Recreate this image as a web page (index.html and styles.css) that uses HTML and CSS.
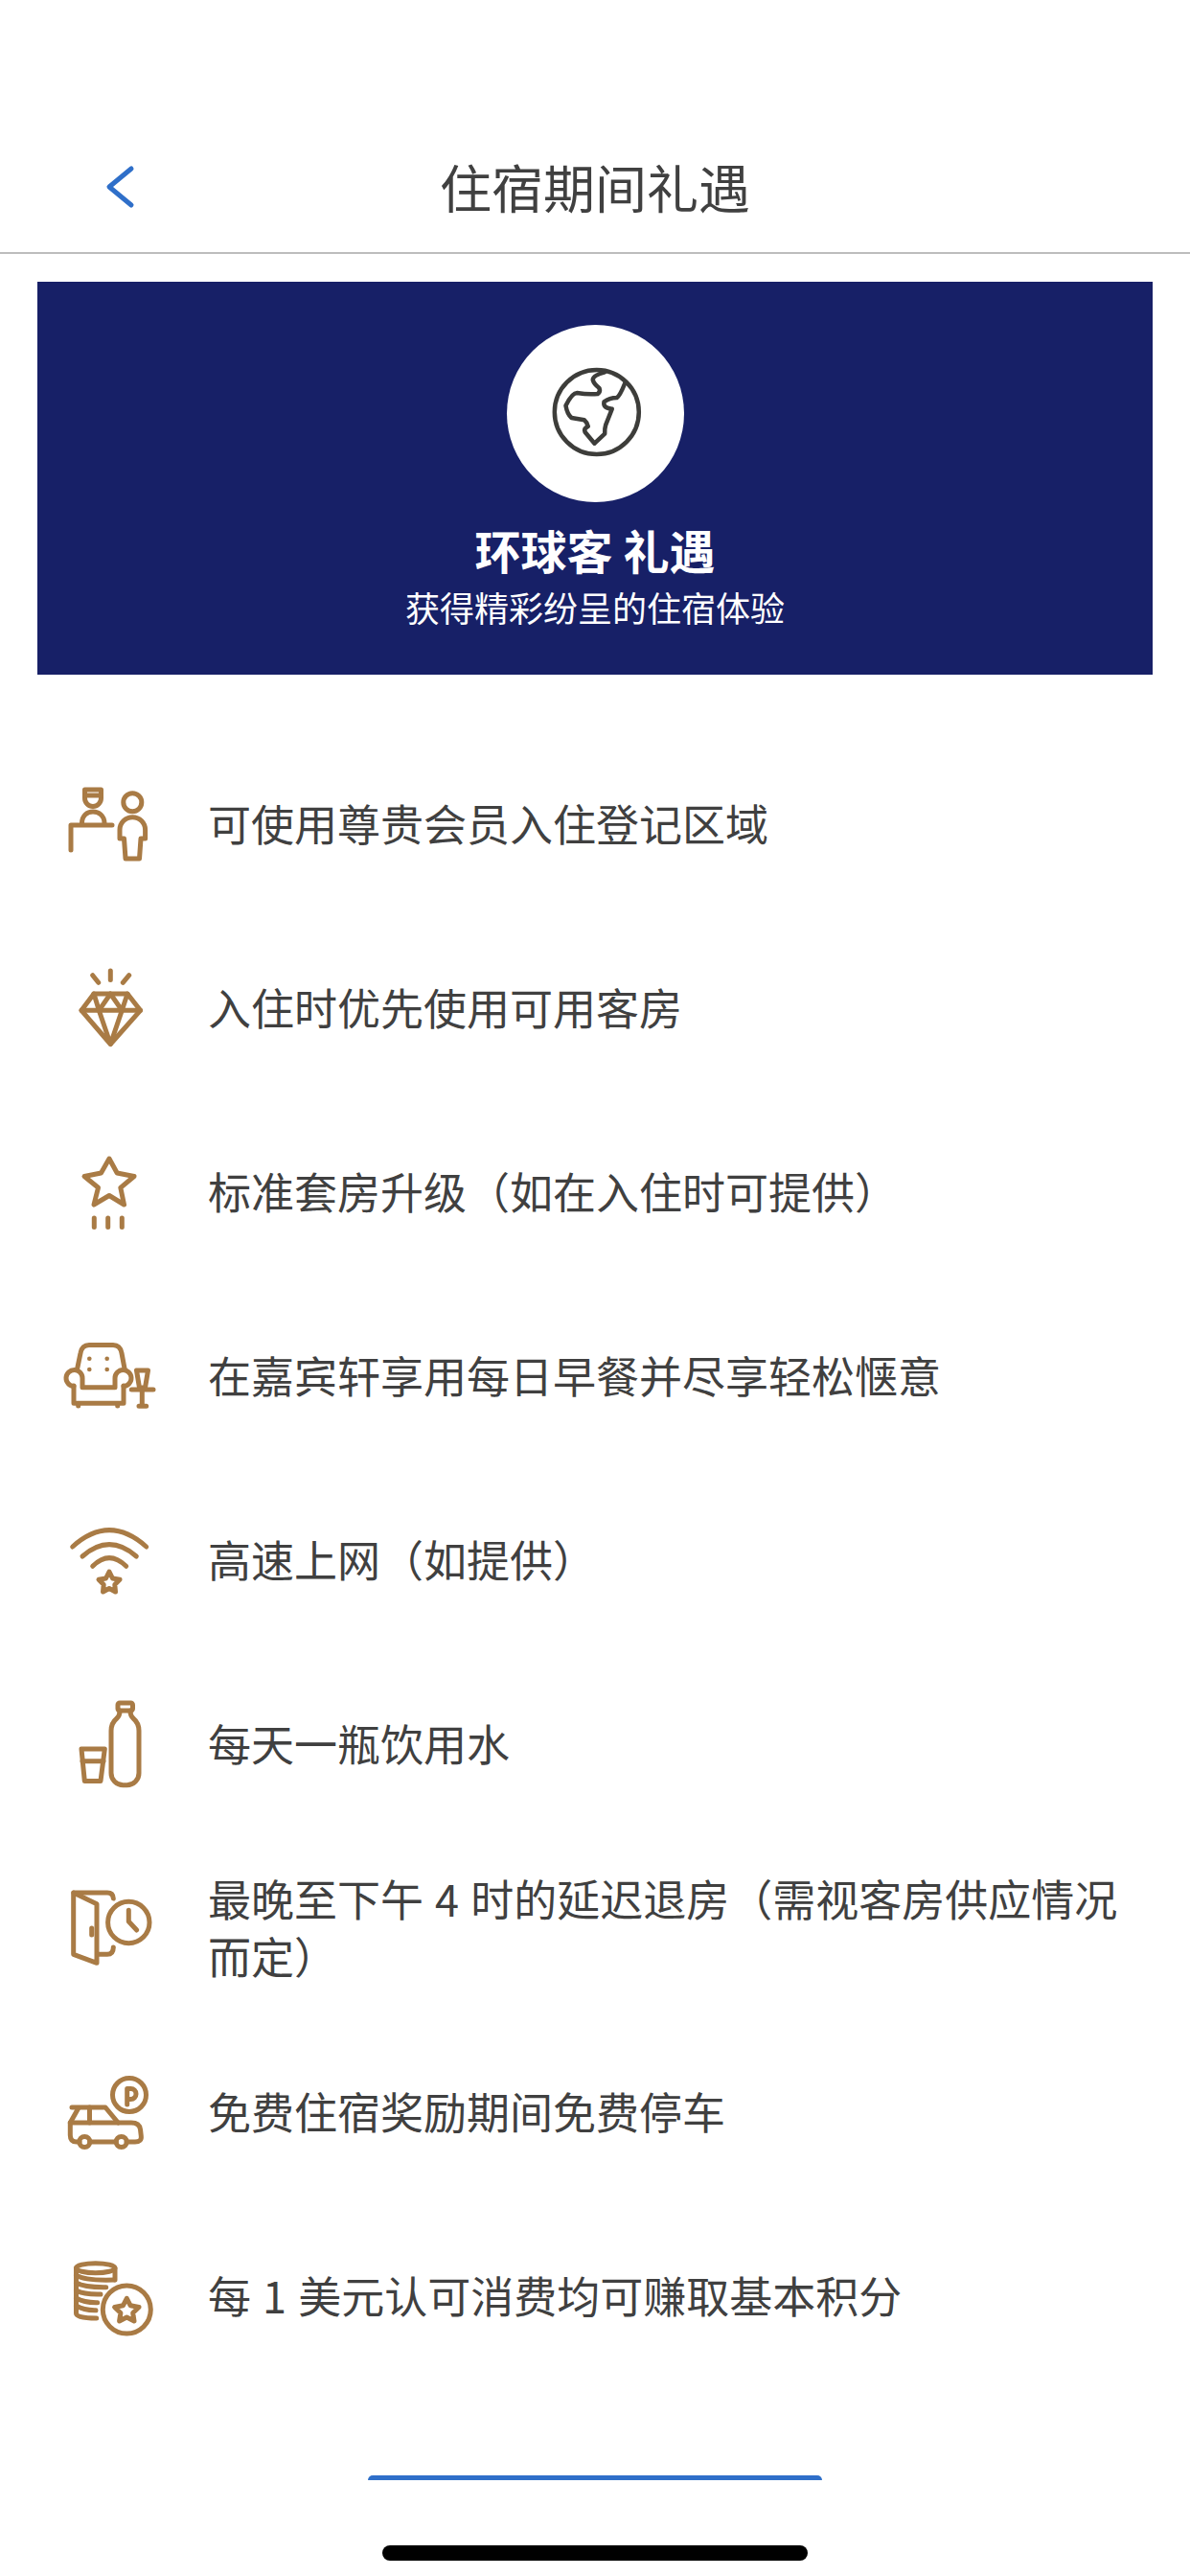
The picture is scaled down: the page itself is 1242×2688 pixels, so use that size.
FILE: index.html
```html
<!DOCTYPE html>
<html lang="zh-CN">
<head>
    <meta charset="UTF-8">
    <meta name="viewport" content="width=device-width, initial-scale=1.0">
    <title>住宿期间礼遇</title>
    <link rel="stylesheet" href="styles.css">
</head>
<body>
    <div class="page">
        <div class="nav">
            <svg class="back" viewBox="0 0 36 48" width="36" height="48">
                <path d="M30 5 L7 24 L30 43"/>
            </svg>
            <div class="nav-title">住宿期间礼遇</div>
        </div>

        <div class="banner">
            <div class="banner-circle">
                <svg class="globe" viewBox="0 0 110 110" width="110" height="110">
                    <circle cx="56.8" cy="53" r="44"/>
                    <path d="M65.2 11.3 Q52 15 52.8 19.7 Q54 24 59.5 28 Q61 32 57.8 34 Q48 35 36.2 33 Q31 33 24.5 46.3 Q26 55 30.5 59 L43.8 61.3 Q47 64 47.8 68 Q43 70 44.5 73.7 L54.5 85.7 L65.2 75.7 Q65 70 66.2 66.3 L72.8 49.7 Q63 49 64.5 42.3 Q70 38 77.8 38 Q81 36 86.2 23"/>
                </svg>
            </div>
            <div class="banner-title">环球客 礼遇</div>
            <div class="banner-sub">获得精彩纷呈的住宿体验</div>
        </div>

        <div class="perks">
            <div class="perk">
                <svg class="ico" viewBox="0 0 120 120" width="120" height="120">
                    <path d="M28.5 24 H45.5 V33 A8.5 8.5 0 0 1 28.5 33 Z"/>
                    <path d="M29 30 H45"/>
                    <path d="M25.5 59 C25.5 51 31 47 37 47 S49 51 49 59"/>
                    <path d="M57 61 H14 V87"/>
                    <circle cx="78.3" cy="37.3" r="9.5"/>
                    <path d="M65 75 V66 A13.3 13.3 0 0 1 91.6 66 V75 H87 L85.5 96 H71 L69.5 75 Z"/>
                </svg>
                <div class="perk-text">可使用尊贵会员入住登记区域</div>
            </div>
            <div class="perk">
                <svg class="ico" viewBox="0 0 120 120" width="120" height="120">
                    <path d="M55.3 21 V30.5 M36.7 25.7 L42.7 33.3 M74.7 25.7 L68.3 33.3"/>
                    <path d="M38 45 H73 L86.5 62.3 L55.3 97.5 L25 62.3 Z"/>
                    <path d="M25 62.3 H86.5"/>
                    <path d="M38 45 L43.3 62.3 L55.3 45 L67.3 62.3 L73 45"/>
                    <path d="M43.3 62.3 L55.3 97.5 L67.3 62.3"/>
                </svg>
                <div class="perk-text">入住时优先使用可用客房</div>
            </div>
            <div class="perk">
                <svg class="ico" viewBox="0 0 120 120" width="120" height="120">
                    <path d="M54 25 L62.2 40 L80 43.5 L65.8 55.3 L69.5 73 L54 63.5 L38 73 L42.5 55.3 L28 43.5 L45.5 40 Z"/>
                    <path d="M38.3 87 V96.5 M52.7 87 V96.5 M67.3 87 V96.5"/>
                </svg>
                <div class="perk-text">标准套房升级（如在入住时可提供）</div>
            </div>
            <div class="perk">
                <svg class="ico" viewBox="0 0 120 120" width="120" height="120">
                    <path d="M20.7 52 L24 36 Q25.5 27.5 33 27.5 H58 Q65.5 27.5 67 36 L70 52"/>
                    <path d="M17 70.5 A8.5 8.5 0 1 1 26 62 V71.7 H60 V62 A8.5 8.5 0 1 1 69 70.5"/>
                    <path d="M17 70 V88.3 H69 V70"/>
                    <path d="M21.7 89 V91 M62.7 89 V91"/>
                    <circle class="dot" cx="33.3" cy="41.7" r="2.3"/>
                    <circle class="dot" cx="51.7" cy="41.7" r="2.3"/>
                    <circle class="dot" cx="33.3" cy="53" r="2.3"/>
                    <circle class="dot" cx="51.7" cy="53" r="2.3"/>
                    <path d="M82.5 54 H94.5 L91.5 72 H85.5 Z"/>
                    <path d="M77.3 74 H100 M88.3 74 V90 M85 91.3 H92.7"/>
                </svg>
                <div class="perk-text">在嘉宾轩享用每日早餐并尽享轻松惬意</div>
            </div>
            <div class="perk">
                <svg class="ico" viewBox="0 0 120 120" width="120" height="120">
                    <path d="M15.7 46 Q54 11.4 92.7 46"/>
                    <path d="M26 56 Q54 31.4 82.3 56"/>
                    <path d="M36.7 66.3 Q54 49 71.7 66.3"/>
                    <path d="M54 72 L57.5 79 L65 80.3 L59.8 85.5 L60.5 93 L54 89.5 L47.5 93 L48.2 85.5 L43 80.3 L50.5 79 Z"/>
                </svg>
                <div class="perk-text">高速上网（如提供）</div>
            </div>
            <div class="perk">
                <svg class="ico" viewBox="0 0 120 120" width="120" height="120">
                    <rect x="63" y="17" width="15.5" height="8" rx="2"/>
                    <path d="M65 25 V26 Q65 30 62 33 Q56 38 56 46 V90 A12.5 12.5 0 0 0 68.5 102.7 H72.5 A12.5 12.5 0 0 0 85 90 V46 Q85 38 79 33 Q76 30 76 26 V25"/>
                    <path d="M25 65 H49.3 L45 98.5 H28.3 Z"/>
                    <path d="M26 77.7 H48"/>
                </svg>
                <div class="perk-text">每天一瓶饮用水</div>
            </div>
            <div class="perk">
                <svg class="ico" viewBox="0 0 120 120" width="120" height="120">
                    <path d="M16.7 23 L41 34.7 V96.3 L16.7 87.3 Z"/>
                    <path d="M17 23 H52 Q58 23 58.3 29"/>
                    <path d="M41.7 87.3 H52 Q58.3 87.3 58.3 80"/>
                    <path d="M35.7 60 V67"/>
                    <circle cx="74.3" cy="54" r="21.7"/>
                    <path d="M74.3 41.3 V53 L82.7 62"/>
                </svg>
                <div class="perk-text">最晚至下午 4 时的延迟退房（需视客房供应情况而定）</div>
            </div>
            <div class="perk">
                <svg class="ico" viewBox="0 0 120 120" width="120" height="120">
                    <circle cx="75" cy="42" r="17.5"/>
                    <path d="M72.7 52 V35.5 H76.5 A5.5 5.5 0 0 1 76.5 46.5 H72.7"/>
                    <path d="M15 55 H50 L63.3 71"/>
                    <path d="M21.7 56 L13.3 71 V84 Q13.3 91 20 91 H23"/>
                    <path d="M33.5 55 V71"/>
                    <path d="M33.8 91 H61.2 M72.2 91 H81 Q88 91 87.3 85 L86.5 78 Q85.5 71 77 71 H13.3"/>
                    <circle cx="28.3" cy="91" r="5.5"/>
                    <circle cx="66.7" cy="91" r="5.5"/>
                </svg>
                <div class="perk-text">免费住宿奖励期间免费停车</div>
            </div>
            <div class="perk">
                <svg class="ico" viewBox="0 0 120 120" width="120" height="120">
                    <ellipse cx="39.7" cy="30.7" rx="20.3" ry="5"/>
                    <path d="M19.5 31 V78 Q19.5 83 40.7 83"/>
                    <path d="M60 31 V43"/>
                    <path d="M19.5 38 Q28 44 59 43"/>
                    <path d="M19.5 46 Q28 51 50.7 50.7"/>
                    <path d="M19.5 54 Q28 58.5 45 58"/>
                    <path d="M19.5 62 Q28 67 41.7 66.7"/>
                    <path d="M19.5 70 Q28 75 40 74.7"/>
                    <circle cx="72.3" cy="74" r="25"/>
                    <path d="M72.3 62.3 L76.2 69.8 L85 71.5 L78.7 77.5 L80 86 L72.3 82 L64.6 86 L65.9 77.5 L59.6 71.5 L68.4 69.8 Z"/>
                </svg>
                <div class="perk-text">每 1 美元认可消费均可赚取基本积分</div>
            </div>
        </div>

        <div class="footer">
            <div class="btn-peek"></div>
            <div class="home-bar"></div>
        </div>
    </div>
</body>
</html>
```

FILE: styles.css
```css
body {
    margin: 0;
    background: #fff;
    font-family: "Noto Sans CJK SC", "Noto Sans", sans-serif;
    color: #404040;
}

.page {
    width: 1242px;
    height: 2688px;
    overflow: hidden;
}

.nav {
    display: grid;
    grid-template-columns: 1fr auto 1fr;
    align-items: center;
    box-sizing: border-box;
    height: 265px;
    padding: 127px 0 1px 107px;
    border-bottom: 2px solid #bdbdbd;
}

.back {
    fill: none;
    stroke: #2f6fc9;
    stroke-width: 5;
    stroke-linecap: round;
    stroke-linejoin: round;
}

.nav-title {
    font-size: 54px;
    line-height: 70px;
    margin-left: -107px;
    color: #404040;
}

.banner {
    display: flex;
    flex-direction: column;
    align-items: center;
    height: 410px;
    margin: 29px 39px 0;
    padding-top: 45px;
    box-sizing: border-box;
    background: #172067;
    color: #fff;
}

.banner-circle {
    display: flex;
    align-items: center;
    justify-content: center;
    width: 185px;
    height: 185px;
    border-radius: 50%;
    background: #fff;
}

.globe {
    fill: none;
    stroke: #3d3d3a;
    stroke-width: 4.5;
    stroke-linecap: round;
    stroke-linejoin: round;
}

.banner-title {
    margin-top: 19px;
    font-size: 48px;
    line-height: 60px;
    font-weight: 700;
}

.banner-sub {
    margin-top: 5px;
    font-size: 36px;
    line-height: 50px;
}

.perks {
    margin-top: 60px;
    padding: 0 40px 0 60px;
}

.perk {
    display: flex;
    align-items: center;
    gap: 37px;
    height: 192px;
}

.ico {
    flex: none;
    fill: none;
    stroke: #a97b45;
    stroke-width: 5;
    stroke-linecap: round;
    stroke-linejoin: round;
}

.ico .dot {
    fill: #a97b45;
    stroke: none;
}

.perk-text {
    margin-top: -3px;
    font-size: 45px;
    line-height: 60px;
    word-spacing: 2px;
}

.footer {
    display: flex;
    flex-direction: column;
    align-items: center;
    margin-top: 91px;
}

.btn-peek {
    width: 474px;
    height: 5px;
    border-radius: 6px 6px 0 0;
    background: #2f6fc9;
}

.home-bar {
    width: 444px;
    height: 16px;
    margin-top: 68px;
    border-radius: 8px;
    background: #000;
}
```
